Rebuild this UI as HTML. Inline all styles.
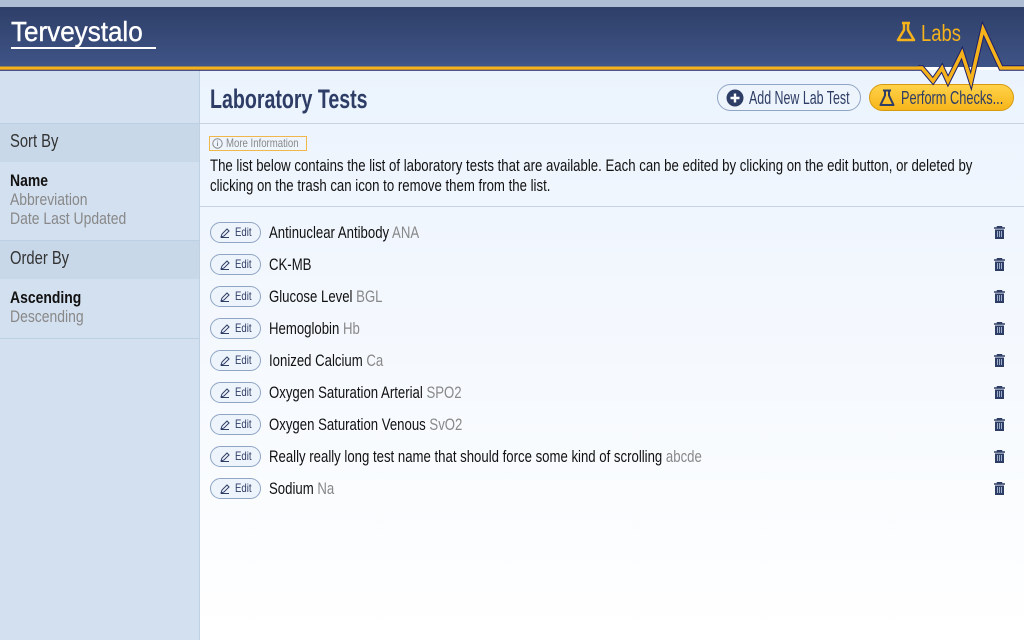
<!DOCTYPE html>
<html><head><meta charset="utf-8"><style>
*{margin:0;padding:0;box-sizing:border-box}
body{width:1024px;height:640px;overflow:hidden;font-family:"Liberation Sans",sans-serif;background:#fff;position:relative;color:#111}
.n{display:inline-block;transform-origin:left center;white-space:nowrap}
.top{position:absolute;left:0;top:0;width:1024px;height:7px;background:#aebdd3}
.hdr{position:absolute;left:0;top:7px;width:1024px;height:60px;background:linear-gradient(#2e3f68,#3f5487)}
.logo{position:absolute;left:11px;top:18px;color:#fff;font-size:28px;line-height:28px;white-space:nowrap;-webkit-text-stroke:0.4px #fff}
.logo .n{transform:scaleX(0.93)}
.logo:after{content:"";position:absolute;left:0;top:29px;width:145px;height:2px;background:#fff}
.labs{position:absolute;left:895px;top:20px;color:#f6b21b;font-size:23px;white-space:nowrap}
.side{position:absolute;left:0;top:70px;width:200px;height:570px;background:#d3e0ef;border-right:1px solid #bfd0e2}
.sh{position:absolute;left:0;width:199px;height:39px;background:#c8d8e8;border-top:1px solid #bcd0e3;font-size:18px;color:#333;padding:7px 10px;}
.sh .n,.opt .n{transform:scaleX(0.82)}
.opt{position:absolute;left:10px;font-size:17px;line-height:19px;color:#888}
.opt b{color:#111}
.main{position:absolute;left:200px;top:70px;width:824px;height:570px;background:linear-gradient(#ebf3fd,#fff)}
h1{position:absolute;left:10px;top:14px;font-size:27px;color:#2e3d66;font-weight:bold;white-space:nowrap}
h1 .n{transform:scaleX(0.726)}
.btn{position:absolute;top:14px;height:27px;border-radius:14px;font-size:18px;color:#2e3d66;padding:3px 0 0 31px;white-space:nowrap}
.hr1{position:absolute;left:0;top:53px;width:824px;border-top:1px solid #c5d3e4}
.hr2{position:absolute;left:0;top:136px;width:824px;border-top:1px solid #c5d3e4}
.more{position:absolute;left:9px;top:66px;width:98px;border:1px solid #f0b84a;font-size:12px;color:#888;padding:0 0 0 16px;height:15px;line-height:13px;white-space:nowrap}
.more .n{transform:scaleX(0.8)}
.desc{position:absolute;left:10px;top:86px;font-size:16.5px;line-height:20px;color:#111}
.desc .n{transform:scaleX(0.80)}
.edit{position:absolute;left:210px;width:51px;height:21px;border:1px solid #8fa5c4;border-radius:11px;font-size:12px;color:#2e3d66;padding-left:24px;line-height:19px;background:#eef4fc;white-space:nowrap}
.edit .n{transform:scaleX(0.8)}
.txt{position:absolute;left:269px;font-size:17px;line-height:22px}
.txt .n{transform:scaleX(0.775)}
.ab{color:#888}
.trash{position:absolute;left:994px;width:11px;height:13px}
</style></head><body>
<div class="top"></div>
<div class="hdr"></div>
<div class="logo"><span class="n">Terveystalo</span></div>
<div class="labs"><svg width="22" height="24" viewBox="0 0 22 24" style="vertical-align:-3px;margin-right:4px"><path d="M7 3h8M9 3v7L3 20h16L13 10V3" fill="none" stroke="#f6b21b" stroke-width="2.5" stroke-linejoin="round"/></svg><span class="n" style="transform:scaleX(0.8)">Labs</span></div>
<div class="side">
<div class="sh" style="top:53px"><span class="n">Sort By</span></div>
<div class="opt" style="top:101px"><b class="n">Name</b><br><span class="n">Abbreviation</span><br><span class="n">Date Last Updated</span></div>
<div class="sh" style="top:170px"><span class="n">Order By</span></div>
<div class="opt" style="top:218px"><b class="n">Ascending</b><br><span class="n">Descending</span></div>
<div style="position:absolute;top:268px;left:0;width:199px;border-top:1px solid #bcd0e3"></div>
</div>
<div class="main">
<h1><span class="n">Laboratory Tests</span></h1>
<div class="btn" style="left:517px;width:144px;border:1px solid #8fa5c4;background:#eef4fc"><svg width="18" height="18" viewBox="0 0 18 18" style="position:absolute;left:8px;top:4px"><circle cx="9" cy="9" r="8.5" fill="#2e3d66"/><path d="M9 4.5v9M4.5 9h9" stroke="#fff" stroke-width="2.4"/></svg><span class="n" style="transform:scaleX(0.69)">Add New Lab Test</span></div>
<div class="btn" style="left:669px;width:145px;border:1px solid #d69a10;background:linear-gradient(#ffd24a,#f7b519)"><svg width="16" height="18" viewBox="0 0 16 18" style="position:absolute;left:9px;top:4px"><path d="M4 1.5h8M6 1.5v5L1.5 16h13L10 6.5v-5" fill="none" stroke="#2e3d66" stroke-width="2" stroke-linejoin="round"/></svg><span class="n" style="transform:scaleX(0.71)">Perform Checks...</span></div>
<div class="hr1"></div>
<div class="more"><svg width="11" height="11" viewBox="0 0 11 11" style="position:absolute;left:2px;top:1px"><circle cx="5.5" cy="5.5" r="4.7" fill="none" stroke="#888"/><path d="M5.5 4.5v3.5M5.5 2.6v1" stroke="#888"/></svg><span class="n">More Information</span></div>
<div class="desc"><span class="n">The list below contains the list of laboratory tests that are available. Each can be edited by clicking on the edit button, or deleted by</span><br><span class="n">clicking on the trash can icon to remove them from the list.</span></div>
<div class="hr2"></div>
</div>

<div class="edit" style="top:222px"><svg width="12" height="12" viewBox="0 0 12 12" style="position:absolute;left:8px;top:4px"><path d="M2 10l1-3 5-5 2 2-5 5zM2 10.5h8" fill="none" stroke="#2e3d66"/></svg><span class="n">Edit</span></div>
<div class="txt" style="top:222px"><span class="n">Antinuclear Antibody <span class="ab">ANA</span></span></div>
<div class="edit" style="top:254px"><svg width="12" height="12" viewBox="0 0 12 12" style="position:absolute;left:8px;top:4px"><path d="M2 10l1-3 5-5 2 2-5 5zM2 10.5h8" fill="none" stroke="#2e3d66"/></svg><span class="n">Edit</span></div>
<div class="txt" style="top:254px"><span class="n">CK-MB</span></div>
<div class="edit" style="top:286px"><svg width="12" height="12" viewBox="0 0 12 12" style="position:absolute;left:8px;top:4px"><path d="M2 10l1-3 5-5 2 2-5 5zM2 10.5h8" fill="none" stroke="#2e3d66"/></svg><span class="n">Edit</span></div>
<div class="txt" style="top:286px"><span class="n">Glucose Level <span class="ab">BGL</span></span></div>
<div class="edit" style="top:318px"><svg width="12" height="12" viewBox="0 0 12 12" style="position:absolute;left:8px;top:4px"><path d="M2 10l1-3 5-5 2 2-5 5zM2 10.5h8" fill="none" stroke="#2e3d66"/></svg><span class="n">Edit</span></div>
<div class="txt" style="top:318px"><span class="n">Hemoglobin <span class="ab">Hb</span></span></div>
<div class="edit" style="top:350px"><svg width="12" height="12" viewBox="0 0 12 12" style="position:absolute;left:8px;top:4px"><path d="M2 10l1-3 5-5 2 2-5 5zM2 10.5h8" fill="none" stroke="#2e3d66"/></svg><span class="n">Edit</span></div>
<div class="txt" style="top:350px"><span class="n">Ionized Calcium <span class="ab">Ca</span></span></div>
<div class="edit" style="top:382px"><svg width="12" height="12" viewBox="0 0 12 12" style="position:absolute;left:8px;top:4px"><path d="M2 10l1-3 5-5 2 2-5 5zM2 10.5h8" fill="none" stroke="#2e3d66"/></svg><span class="n">Edit</span></div>
<div class="txt" style="top:382px"><span class="n">Oxygen Saturation Arterial <span class="ab">SPO2</span></span></div>
<div class="edit" style="top:414px"><svg width="12" height="12" viewBox="0 0 12 12" style="position:absolute;left:8px;top:4px"><path d="M2 10l1-3 5-5 2 2-5 5zM2 10.5h8" fill="none" stroke="#2e3d66"/></svg><span class="n">Edit</span></div>
<div class="txt" style="top:414px"><span class="n">Oxygen Saturation Venous <span class="ab">SvO2</span></span></div>
<div class="edit" style="top:446px"><svg width="12" height="12" viewBox="0 0 12 12" style="position:absolute;left:8px;top:4px"><path d="M2 10l1-3 5-5 2 2-5 5zM2 10.5h8" fill="none" stroke="#2e3d66"/></svg><span class="n">Edit</span></div>
<div class="txt" style="top:446px"><span class="n">Really really long test name that should force some kind of scrolling <span class="ab">abcde</span></span></div>
<div class="edit" style="top:478px"><svg width="12" height="12" viewBox="0 0 12 12" style="position:absolute;left:8px;top:4px"><path d="M2 10l1-3 5-5 2 2-5 5zM2 10.5h8" fill="none" stroke="#2e3d66"/></svg><span class="n">Edit</span></div>
<div class="txt" style="top:478px"><span class="n">Sodium <span class="ab">Na</span></span></div>

<svg class="trash" style="top:226px" viewBox="0 0 11 13"><path d="M0 2h11M3.5 2V0.5h4V2" fill="none" stroke="#2e3d66" stroke-width="1.5"/><rect x="1" y="3.5" width="9" height="9.5" fill="#2e3d66"/><path d="M3.5 5v6M5.5 5v6M7.5 5v6" stroke="#9fb0cc"/></svg>
<svg class="trash" style="top:258px" viewBox="0 0 11 13"><path d="M0 2h11M3.5 2V0.5h4V2" fill="none" stroke="#2e3d66" stroke-width="1.5"/><rect x="1" y="3.5" width="9" height="9.5" fill="#2e3d66"/><path d="M3.5 5v6M5.5 5v6M7.5 5v6" stroke="#9fb0cc"/></svg>
<svg class="trash" style="top:290px" viewBox="0 0 11 13"><path d="M0 2h11M3.5 2V0.5h4V2" fill="none" stroke="#2e3d66" stroke-width="1.5"/><rect x="1" y="3.5" width="9" height="9.5" fill="#2e3d66"/><path d="M3.5 5v6M5.5 5v6M7.5 5v6" stroke="#9fb0cc"/></svg>
<svg class="trash" style="top:322px" viewBox="0 0 11 13"><path d="M0 2h11M3.5 2V0.5h4V2" fill="none" stroke="#2e3d66" stroke-width="1.5"/><rect x="1" y="3.5" width="9" height="9.5" fill="#2e3d66"/><path d="M3.5 5v6M5.5 5v6M7.5 5v6" stroke="#9fb0cc"/></svg>
<svg class="trash" style="top:354px" viewBox="0 0 11 13"><path d="M0 2h11M3.5 2V0.5h4V2" fill="none" stroke="#2e3d66" stroke-width="1.5"/><rect x="1" y="3.5" width="9" height="9.5" fill="#2e3d66"/><path d="M3.5 5v6M5.5 5v6M7.5 5v6" stroke="#9fb0cc"/></svg>
<svg class="trash" style="top:386px" viewBox="0 0 11 13"><path d="M0 2h11M3.5 2V0.5h4V2" fill="none" stroke="#2e3d66" stroke-width="1.5"/><rect x="1" y="3.5" width="9" height="9.5" fill="#2e3d66"/><path d="M3.5 5v6M5.5 5v6M7.5 5v6" stroke="#9fb0cc"/></svg>
<svg class="trash" style="top:418px" viewBox="0 0 11 13"><path d="M0 2h11M3.5 2V0.5h4V2" fill="none" stroke="#2e3d66" stroke-width="1.5"/><rect x="1" y="3.5" width="9" height="9.5" fill="#2e3d66"/><path d="M3.5 5v6M5.5 5v6M7.5 5v6" stroke="#9fb0cc"/></svg>
<svg class="trash" style="top:450px" viewBox="0 0 11 13"><path d="M0 2h11M3.5 2V0.5h4V2" fill="none" stroke="#2e3d66" stroke-width="1.5"/><rect x="1" y="3.5" width="9" height="9.5" fill="#2e3d66"/><path d="M3.5 5v6M5.5 5v6M7.5 5v6" stroke="#9fb0cc"/></svg>
<svg class="trash" style="top:482px" viewBox="0 0 11 13"><path d="M0 2h11M3.5 2V0.5h4V2" fill="none" stroke="#2e3d66" stroke-width="1.5"/><rect x="1" y="3.5" width="9" height="9.5" fill="#2e3d66"/><path d="M3.5 5v6M5.5 5v6M7.5 5v6" stroke="#9fb0cc"/></svg>

<svg style="position:absolute;left:0;top:0" width="1024" height="100" viewBox="0 0 1024 100">
<path d="M0 68H922L933 81 942 68 948 81 962 53 971 81 983 29 1001 68H1024" fill="none" stroke="#1d1f6a" stroke-width="5.5" stroke-linejoin="miter"/>
<path d="M0 68H922L933 81 942 68 948 81 962 53 971 81 983 29 1001 68H1024" fill="none" stroke="#f6b21b" stroke-width="3.5" stroke-linejoin="miter"/>
<rect x="0" y="63" width="918" height="3.5" fill="#3f5487"/>
</svg>
</body></html>
